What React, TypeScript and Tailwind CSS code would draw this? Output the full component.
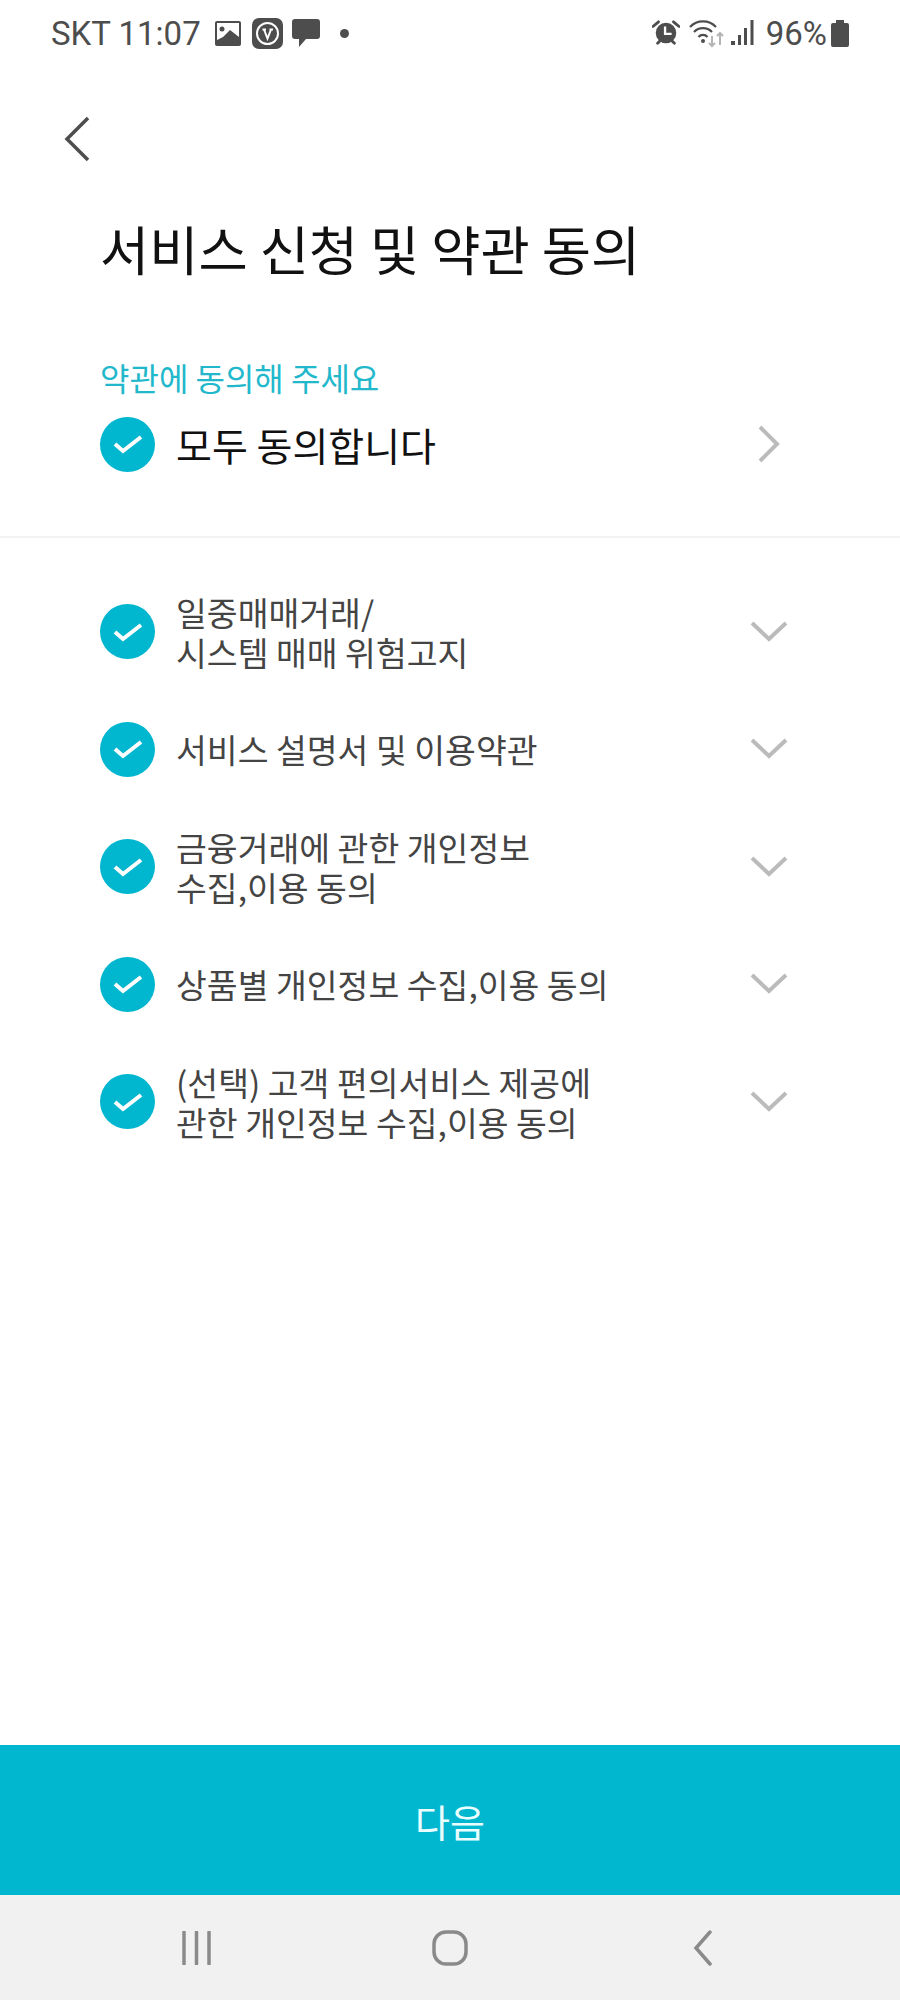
import { Fragment } from "react";

const teal = "#01b6cf";

const StatusBar = () => (
  <div className="flex items-center justify-between h-[66px] pl-[51px] pr-[51px] text-[#4d4d4d]">
    <div className="flex items-center">
      <span className="text-[33px] leading-none font-['Roboto',sans-serif] mt-[1px]">SKT 11:07</span>
      <svg width="26" height="25" viewBox="0 0 26 25" className="ml-[14px]">
        <rect width="26" height="25" rx="2" fill="#4d4d4d" />
        <rect x="2" y="2" width="22" height="21" fill="#fff" />
        <circle cx="7" cy="8" r="2.500" fill="#4d4d4d" />
        <path d="M2 23v-4l6-3 7-7 9 7v7z" fill="#4d4d4d" />
      </svg>
      <svg width="31" height="31" viewBox="0 0 31 31" className="ml-[11px]">
        <rect width="31" height="31" rx="7" fill="#4d4d4d" />
        <circle cx="15.500" cy="15.500" r="10.500" fill="none" stroke="#fff" strokeWidth="2" />
        <path d="M10.500 11.500h3.500M17.500 11.500H21M12 11.500l3.500 9 3.500-9" fill="none" stroke="#fff" strokeWidth="2" />
      </svg>
      <svg width="28" height="28" viewBox="0 0 28 28" className="ml-[9px]">
        <path d="M3 0h22a3 3 0 0 1 3 3v14a3 3 0 0 1-3 3H14l-7 8v-8H3a3 3 0 0 1-3-3V3a3 3 0 0 1 3-3z" fill="#4d4d4d" />
      </svg>
      <span className="ml-[20px] w-[9px] h-[9px] rounded-full bg-[#4d4d4d]" />
    </div>
    <div className="flex items-center">
      <svg width="28" height="28" viewBox="0 0 30 28">
        <path d="M1 7l6-5M29 7l-6-5M6 25l3-3M24 25l-3-3" stroke="#4d4d4d" strokeWidth="3" strokeLinecap="round" />
        <circle cx="15" cy="14" r="11" fill="#4d4d4d" />
        <path d="M14 7v8h7" fill="none" stroke="#fff" strokeWidth="2.500" />
      </svg>
      <svg width="36" height="30" viewBox="0 0 36 30" className="ml-[9px]">
        <path d="M1 9a18 18 0 0 1 26 0M5 14a12.500 12.500 0 0 1 18 0M9.500 19a6 6 0 0 1 9 0" fill="none" stroke="#4d4d4d" strokeWidth="2.200" />
        <circle cx="14" cy="23" r="2" fill="#4d4d4d" />
        <path d="M23 18v10M20 25l3 3 3-3" fill="none" stroke="#b5b5b5" strokeWidth="2" />
        <path d="M31 27V15M28 18l3-3 3 3" fill="none" stroke="#b5b5b5" strokeWidth="2" />
      </svg>
      <svg width="24" height="26" viewBox="0 0 24 26" className="ml-[6px]">
        <rect x="0" y="21" width="4" height="4" fill="#4d4d4d" />
        <rect x="7" y="15" width="3" height="10" fill="#4d4d4d" />
        <rect x="13" y="8" width="3" height="17" fill="#4d4d4d" />
        <rect x="19.500" y="0" width="3" height="25" fill="#4d4d4d" />
      </svg>
      <span className="ml-[11px] text-[33px] leading-none font-['Roboto',sans-serif] mt-[1px]">96%</span>
      <svg width="18" height="27" viewBox="0 0 18 27" className="ml-[4px]">
        <path d="M5 0h8v3h3a2 2 0 0 1 2 2v20a2 2 0 0 1-2 2H2a2 2 0 0 1-2-2V5a2 2 0 0 1 2-2h3z" fill="#4d4d4d" />
      </svg>
    </div>
  </div>
);

const CheckCircle = () => (
  <span className="flex items-center justify-center shrink-0 w-[55px] h-[55px] rounded-full bg-[#01b6cf]">
    <svg width="30" height="22" viewBox="0 0 30 22">
      <path d="M2 11l8 7L28 4" fill="none" stroke="#fff" strokeWidth="4" />
    </svg>
  </span>
);

const ChevronDown = () => (
  <svg width="38" height="22" viewBox="0 0 38 22" className="shrink-0 ml-auto">
    <path d="M2 2l17 16L36 2" fill="none" stroke="#bbbbbb" strokeWidth="4" />
  </svg>
);

const Term = ({ lines }: { lines: string[] }) => (
  <div className="flex items-center h-[117.5px] pl-[100px] pr-[112px]">
    <CheckCircle />
    <div className="ml-[21px] text-[33.5px] leading-[40px] text-[#444444]">
      {lines.map((line, i) => (
        <Fragment key={line}>
          {i > 0 && <br />}
          {line}
        </Fragment>
      ))}
    </div>
    <ChevronDown />
  </div>
);

const terms = [
  ["일중매매거래/", "시스템 매매 위험고지"],
  ["서비스 설명서 및 이용약관"],
  ["금융거래에 관한 개인정보", "수집,이용 동의"],
  ["상품별 개인정보 수집,이용 동의"],
  ["(선택) 고객 편의서비스 제공에", "관한 개인정보 수집,이용 동의"],
];

export default function App() {
  return (
    <div className="flex flex-col w-[900px] h-[2000px] bg-white font-['Noto_Sans_CJK_KR','Noto_Sans',sans-serif]">
      <StatusBar />
      <div className="pl-[64px] pt-[50px]">
        <svg width="26" height="46" viewBox="0 0 26 46" className="block">
          <path d="M24 2L3 23l21 21" fill="none" stroke="#4d4d4d" strokeWidth="3.500" />
        </svg>
      </div>
      <h1 className="pl-[100px] mt-[50px] text-[53.5px] leading-[72px] font-normal text-[#111111]">
        서비스 신청 및 약관 동의
      </h1>
      <p className="pl-[100px] mt-[71px] text-[32px] leading-[44px] text-[#22b8cc]">약관에 동의해 주세요</p>
      <div className="flex items-center h-[56px] mt-[17px] pl-[100px] pr-[120px]">
        <CheckCircle />
        <span className="ml-[21px] text-[39px] leading-[56px] text-[#111111]">모두 동의합니다</span>
        <svg width="22" height="38" viewBox="0 0 22 38" className="ml-auto">
          <path d="M2 2l17 17L2 36" fill="none" stroke="#bbbbbb" strokeWidth="4" />
        </svg>
      </div>
      <div className="h-[2px] mt-[64px] bg-[#f3f3f3]" />
      <div className="mt-[35px]">
        {terms.map((lines) => (
          <Term key={lines[0]} lines={lines} />
        ))}
      </div>
      <button className="mt-auto h-[150px] text-[38px] text-[#eaffff]" style={{ backgroundColor: teal }}>
        다음
      </button>
      <div className="flex items-center justify-center h-[105px] bg-[#f1f1f1]">
        <div className="flex justify-center w-[253px]">
          <svg width="32" height="34" viewBox="0 0 32 34">
            <path d="M3 1v32M15.500 1v32M28 1v32" stroke="#8a8a8a" strokeWidth="3.500" strokeLinecap="round" />
          </svg>
        </div>
        <div className="flex justify-center w-[253px]">
          <svg width="36" height="36" viewBox="0 0 36 36">
            <rect x="2" y="2" width="32" height="32" rx="12" fill="none" stroke="#8a8a8a" strokeWidth="3.500" />
          </svg>
        </div>
        <div className="flex justify-center w-[253px]">
          <svg width="22" height="36" viewBox="0 0 22 36">
            <path d="M18 2L4 18l14 16" fill="none" stroke="#8a8a8a" strokeWidth="3.500" strokeLinecap="round" />
          </svg>
        </div>
      </div>
    </div>
  );
}
